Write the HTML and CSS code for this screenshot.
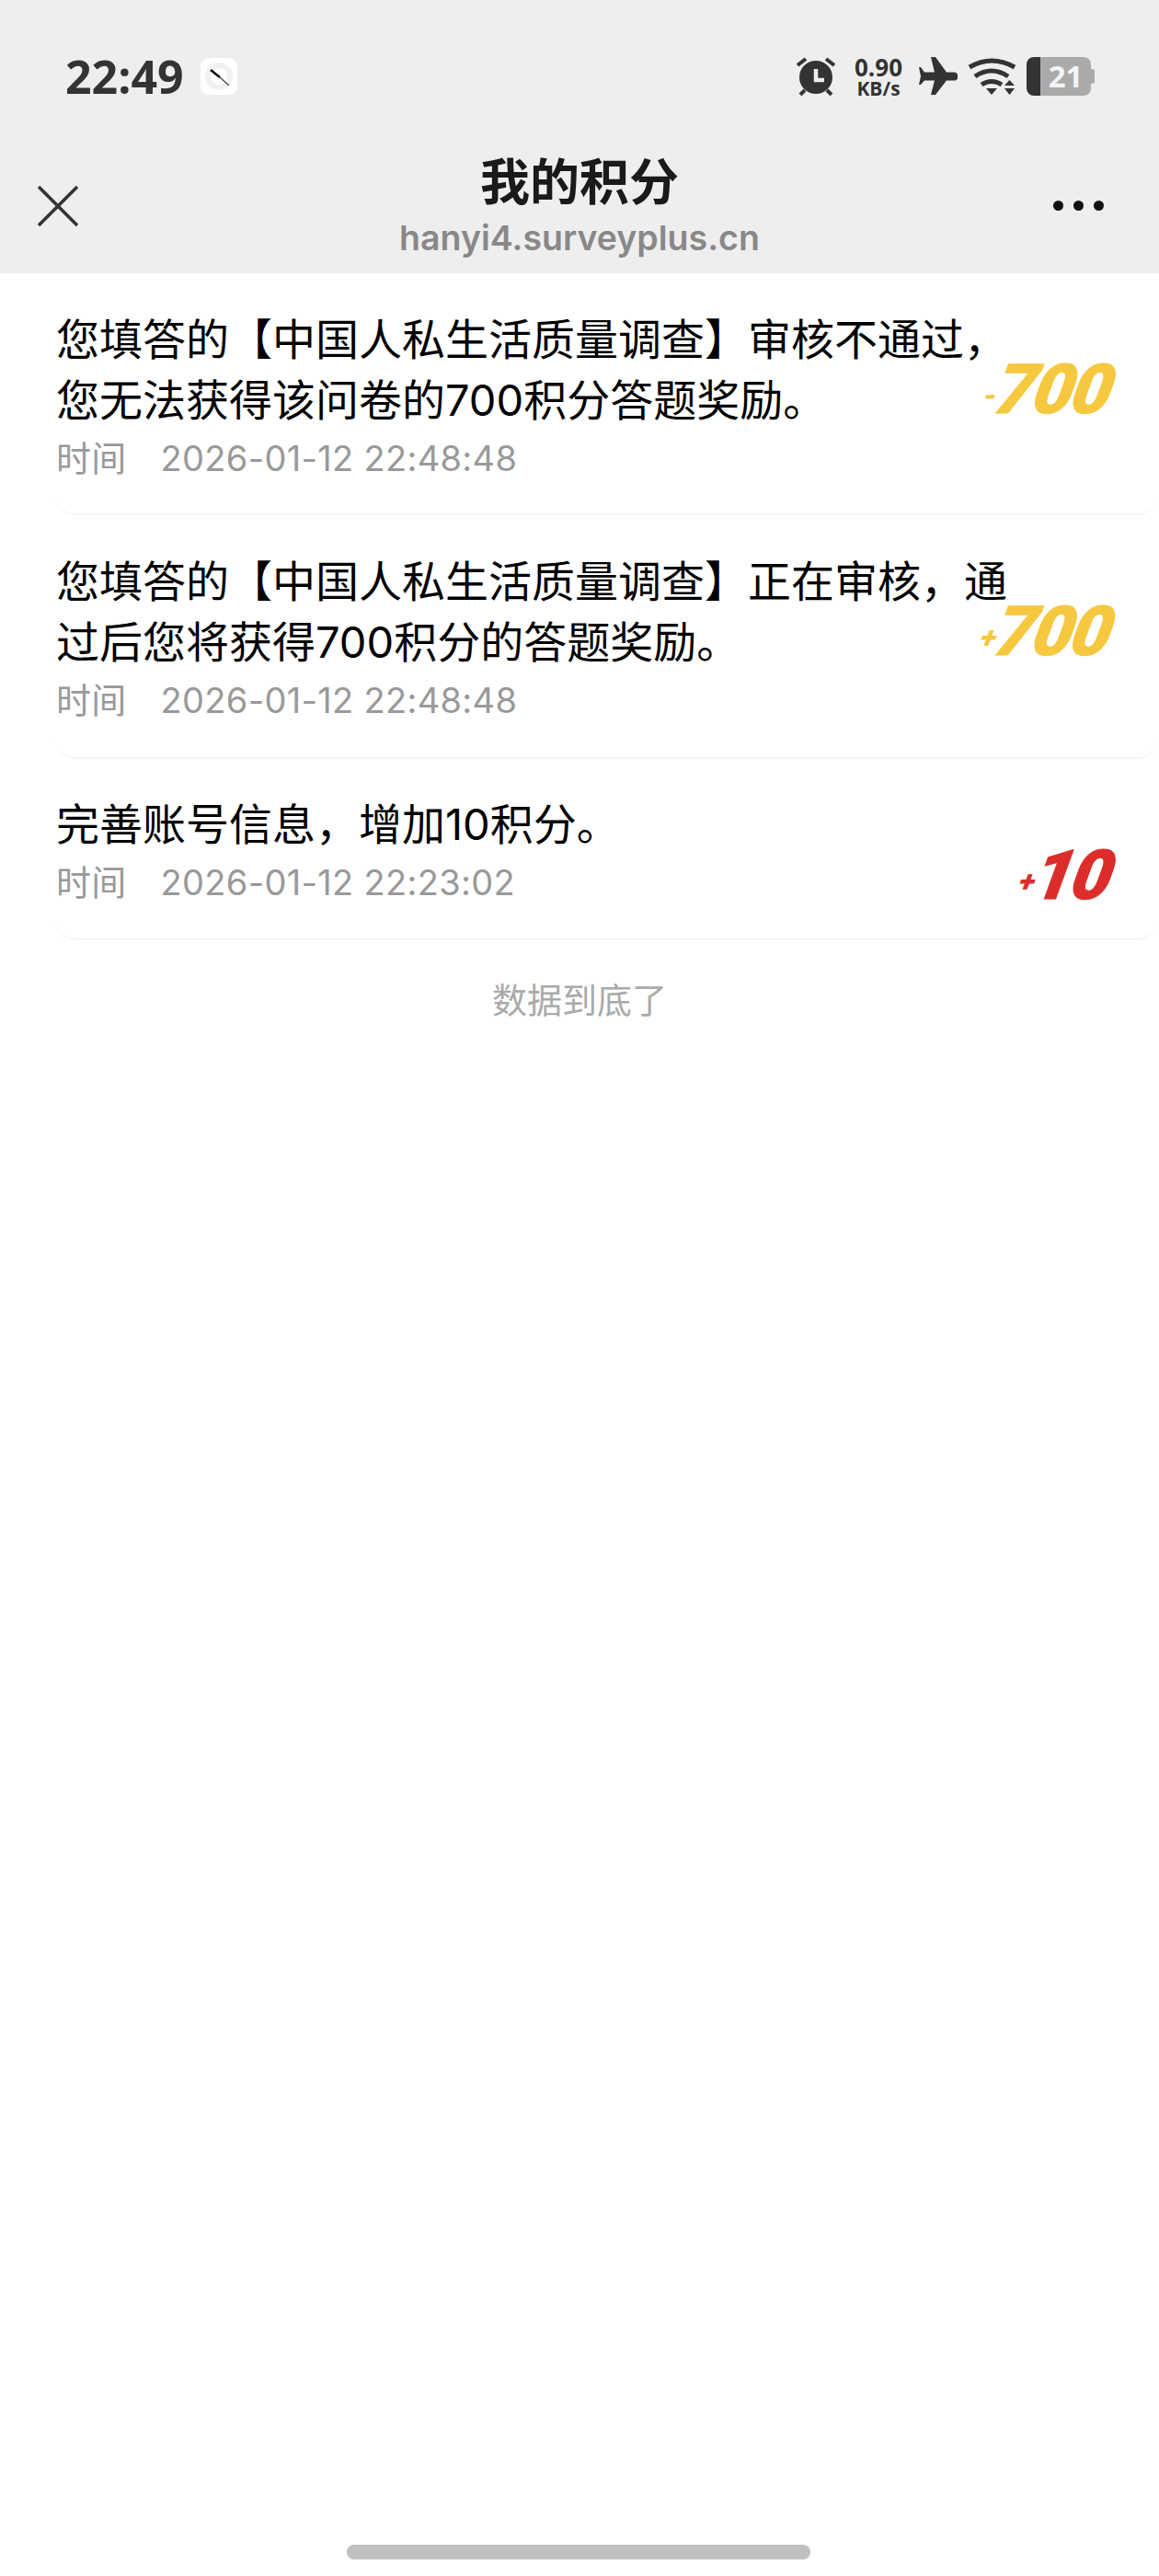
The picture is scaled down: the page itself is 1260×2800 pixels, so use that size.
FILE: index.html
```html
<!DOCTYPE html>
<html>
<head>
  <meta charset="utf-8">
  <title>我的积分</title>
  <link rel="stylesheet" href="styles.css">
</head>
<body>

  <div class="header">
    <div class="status">
      <div class="status-left">
        <span class="clock">22:49</span>
        <svg class="notify" width="40" height="40" viewBox="0 0 40 40">
          <rect width="40" height="40" rx="9" fill="#fff"/>
          <circle cx="20" cy="20" r="15" fill="#f1f1f1"/>
          <circle cx="20" cy="20" r="9" fill="#fff"/>
          <path d="M11 13L21 21" stroke="#000" stroke-width="2.4"/>
          <path d="M21 21L31 30" stroke="#444" stroke-width="1.2"/>
        </svg>
      </div>
      <div class="status-right">
        <svg class="ic-alarm" width="42" height="42" viewBox="0 0 42 42">
          <circle cx="21" cy="22" r="18" fill="#333"/>
          <path d="M21 13V25H30" fill="none" stroke="#eee" stroke-width="4.5"/>
          <path d="M1 9L10 2M41 9L32 2M4 41L9 36M38 41L33 36" stroke="#333" stroke-width="4"/>
        </svg>
        <div class="speed"><span class="speed-num">0.90</span><span class="speed-unit">KB/s</span></div>
        <svg class="ic-plane" width="42" height="42" viewBox="0 0 42 42">
          <path d="M13 0H18L30 16.500H38C44 16.500 44 25.500 38 25.500H30L18 41H13L17 25.500H6L2 30H0L2 21L0 11H2L6 16.500H17Z" fill="#333"/>
        </svg>
        <svg class="ic-wifi" width="53" height="42" viewBox="0 0 53 42">
          <g fill="none" stroke="#333" stroke-width="5">
            <path d="M2 11Q26 -3 51 11"/>
            <path d="M8 21Q26 9 44 21"/>
            <path d="M15 30Q26 23 37 30"/>
          </g>
          <path d="M20 34H32L26 41ZM45.500 25L51 31H40ZM40 34H51L45.500 41Z" fill="#333"/>
        </svg>
        <div class="battery">
          <div class="battery-fill"></div>
          <div class="battery-body">21</div>
          <div class="battery-nub"></div>
        </div>
      </div>
    </div>

    <div class="nav">
      <svg class="ic-close" width="44" height="44" viewBox="0 0 44 44">
        <path d="M1 1L43 43M43 1L1 43" stroke="#333" stroke-width="3.600"/>
      </svg>
      <div class="nav-title">
        <div class="title">我的积分</div>
        <div class="url">hanyi4.surveyplus.cn</div>
      </div>
      <div class="more"><i></i><i></i><i></i></div>
    </div>
  </div>

  <div class="list">
    <div class="row">
      <div class="row-text">您填答的【中国人私生活质量调查】审核不通过，您无法获得该问卷的700积分答题奖励。</div>
      <div class="row-time"><span class="time-label">时间</span>2026-01-12 22:48:48</div>
      <div class="amount yellow"><span class="sign">-</span>700</div>
    </div>
    <div class="row">
      <div class="row-text">您填答的【中国人私生活质量调查】正在审核，通过后您将获得700积分的答题奖励。</div>
      <div class="row-time"><span class="time-label">时间</span>2026-01-12 22:48:48</div>
      <div class="amount yellow"><span class="sign">+</span>700</div>
    </div>
    <div class="row">
      <div class="row-text">完善账号信息，增加10积分。</div>
      <div class="row-time"><span class="time-label">时间</span>2026-01-12 22:23:02</div>
      <div class="amount red"><span class="sign">+</span>10</div>
    </div>
  </div>

  <div class="end">数据到底了</div>

  <div class="home-bar"></div>

</body>
</html>
```

FILE: styles.css
```css
body {
  margin: 0;
  height: 2800px;
  position: relative;
  background: #fff;
  color: #000;
  font-family: Inter, "Noto Sans CJK SC", sans-serif;
  overflow: hidden;
}

/* top grey area */
.header {
  height: 297px;
  background: #eeeeee;
}
.status {
  height: 150px;
  box-sizing: border-box;
  padding: 62px 70px 0 71px;
  display: flex;
  justify-content: space-between;
  align-items: flex-start;
}
.status-left {
  display: flex;
  align-items: center;
  height: 42px;
}
.clock {
  font-family: "Open Sans", sans-serif;
  font-size: 50px;
  font-weight: 700;
  line-height: 42px;
  color: #333;
}
.notify {
  margin-left: 18px;
}
.status-right {
  display: flex;
  align-items: center;
  height: 42px;
}
.speed {
  display: flex;
  flex-direction: column;
  align-items: center;
  margin-left: 19px;
  width: 56px;
  color: #333;
  font-family: "Open Sans", sans-serif;
  font-weight: 700;
}
.speed-num {
  font-size: 26px;
  line-height: 26px;
}
.speed-unit {
  font-size: 21px;
  line-height: 20px;
}
.ic-plane {
  margin-left: 16px;
}
.ic-wifi {
  margin-left: 11px;
}
.battery {
  display: flex;
  align-items: center;
  margin-left: 11px;
}
.battery-fill {
  width: 15px;
  height: 42px;
  background: #333;
  border-radius: 8px 0 0 8px;
}
.battery-body {
  width: 55px;
  height: 42px;
  background: #aaaaaa;
  border-radius: 0 8px 8px 0;
  color: #f4f4f4;
  font-family: "Open Sans", sans-serif;
  font-size: 33px;
  font-weight: 700;
  line-height: 42px;
  text-align: center;
}
.battery-nub {
  width: 4px;
  height: 16px;
  background: #aaaaaa;
  border-radius: 0 3px 3px 0;
}

.nav {
  height: 147px;
  box-sizing: border-box;
  padding: 0 60px;
  display: grid;
  grid-template-columns: 1fr auto 1fr;
  align-items: center;
}
.ic-close {
  margin-top: 1px;
  margin-left: -19px;
}
.nav-title {
  text-align: center;
}
.title {
  font-size: 54px;
  font-weight: 700;
  line-height: 70px;
  color: #1a1a1a;
}
.url {
  font-size: 37.500px;
  font-weight: 600;
  line-height: 50px;
  color: #888;
}
.more {
  display: flex;
  justify-content: flex-end;
  gap: 11px;
}
.more i {
  width: 11px;
  height: 11px;
  border-radius: 50%;
  background: #111;
}

/* list */
.row {
  position: relative;
  margin-left: 60px;
  margin-right: 2px;
  padding: 39px 0 0 1px;
  border-bottom: 2px solid #f5f5f5;
  border-radius: 0 0 22px 22px;
  box-sizing: border-box;
}
.row:nth-child(1) {
  height: 263px;
}
.row:nth-child(2) {
  height: 265px;
}
.row:nth-child(3) {
  height: 197px;
  padding-top: 38px;
}
.row-text {
  width: 1040px;
  font-size: 47px;
  line-height: 66px;
}
.row-time {
  margin-top: 5px;
  font-size: 38px;
  line-height: 50px;
  letter-spacing: 0.300px;
  color: #999;
}
.time-label {
  margin-right: 37px;
}
.amount {
  position: absolute;
  top: 86px;
  right: 50px;
  font-family: Roboto, sans-serif;
  font-size: 75px;
  font-weight: 900;
  line-height: 80px;
  letter-spacing: -2px;
  -webkit-text-stroke: 1px currentColor;
  transform: skewX(-20deg);
}
.sign {
  font-size: 32px;
  margin-right: 0;
  vertical-align: 8px;
  -webkit-text-stroke: 0;
}
.yellow {
  color: #f6c83f;
}
.red {
  color: #dc2d2a;
}

.end {
  margin-top: 40px;
  text-align: center;
  font-size: 38px;
  line-height: 50px;
  color: #aaa;
}

.home-bar {
  position: absolute;
  left: 377px;
  top: 2766px;
  width: 504px;
  height: 16px;
  border-radius: 8px;
  background: #c0c0c0;
}
```
